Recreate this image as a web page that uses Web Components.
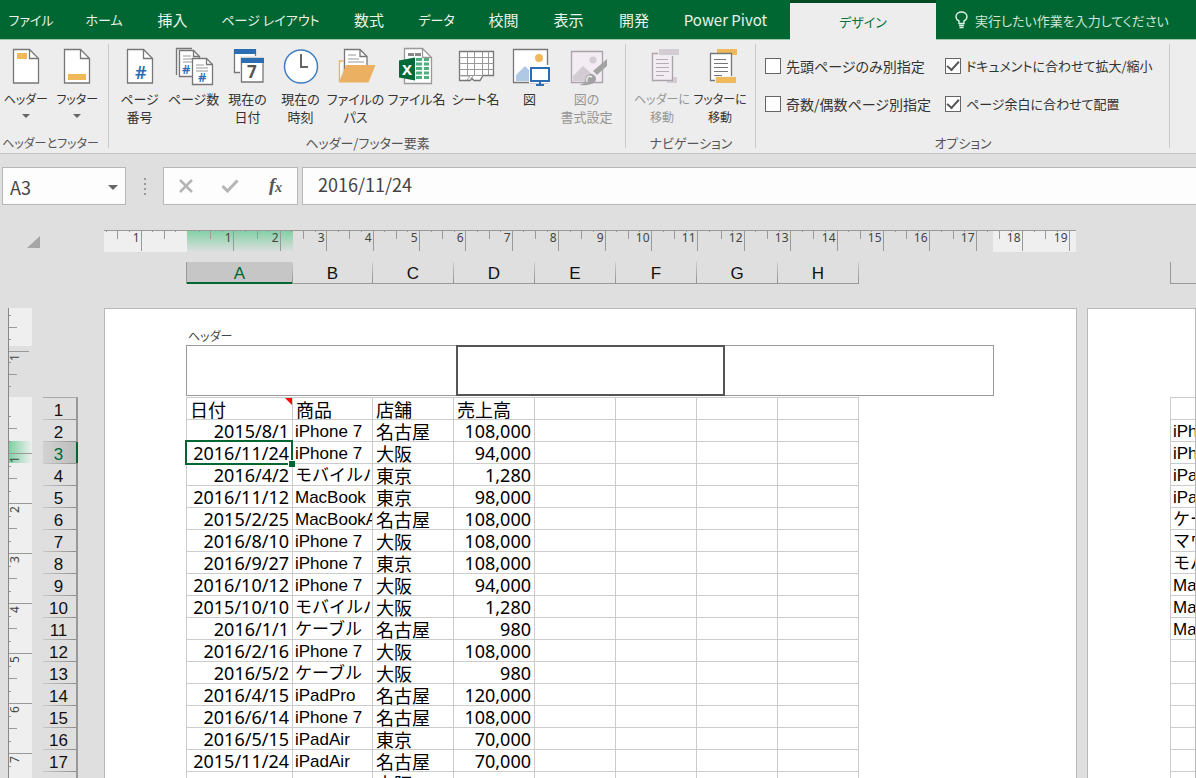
<!DOCTYPE html>
<html lang="ja">
<head>
<meta charset="utf-8">
<title>ワークシート</title>
<style>
html, body { margin: 0; height: 100%; }
body {
  font: 14px/18px "Noto Sans CJK JP", sans-serif;
  font-feature-settings: "palt";
  color: #444; background: #dfdfdf;
  --green: #006733;
}
</style>
</head>
<body>
<excel-app></excel-app>
<script>
const define = (name, html, setup) => {
  const template = document.createElement('template');
  template.innerHTML = '<style>*{box-sizing:border-box}:host([hidden]){display:none}button,input,textarea{font:inherit;font-feature-settings:inherit;color:inherit;margin:0;padding:0;border:0;background:none;outline:0}</style>' + html;
  customElements.define(name, class extends HTMLElement {
    connectedCallback() {
      if (this.shadowRoot) return;
      this.attachShadow({ mode: 'open' }).append(template.content.cloneNode(true));
      if (setup) setup(this, this.shadowRoot);
    }
  });
};

const page = (x, y, w, h, f, stroke = '#777') =>
  `<path d="M${x} ${y}h${w - f}l${f} ${f}v${h - f}h-${w}z" fill="#fff" stroke="${stroke}" stroke-width="1.3"/><path d="M${x + w - f} ${y}v${f}h${f}" fill="none" stroke="${stroke}" stroke-width="1.3"/>`;
const hash = (x, y, size) =>
  `<text x="${x}" y="${y}" font-family="Noto Sans" font-weight="600" font-size="${size}" fill="#2b6cb3">#</text>`;

const ICONS = {
  header: page(7.5, 2.5, 25, 33.5, 9) + '<path d="M11 6h10v6H11z" fill="#efb95c"/>',
  footer: page(7.5, 2.5, 25, 33.5, 9) + '<path d="M11 27h18v6H11z" fill="#efb95c"/>',
  number: page(7.5, 2.5, 25, 33.5, 9) + hash(15, 32, 18),
  count: '<path d="M18 1.500H2.500V28" fill="none" stroke="#777" stroke-width="1.300"/>' +
    page(5.5, 3.5, 20, 26, 6) + '<path d="M9 9h8M9 12h10M9 15h10" stroke="#999"/>' + hash(8, 27, 13) +
    page(18.5, 11.5, 20, 26, 6) + '<path d="M22 18h8M22 21h12M22 24h12" stroke="#999"/>' + hash(24, 35, 13),
  date: '<path d="M6.500 3.500h21v22h-21z" fill="#fff" stroke="#777" stroke-width="1.300"/><path d="M6 2h22v5H6z" fill="#2b6cb3"/>' +
    '<path d="M12 9h25v28H12z" fill="#ededed"/><path d="M13.500 11.500h21.500v23.500H13.500z" fill="#fff" stroke="#777" stroke-width="1.300"/><path d="M13 11h23v5H13z" fill="#2b6cb3"/>' +
    '<text x="19" y="31" font-family="Noto Sans" font-weight="700" font-size="17" fill="#555">7</text>',
  time: '<circle cx="20" cy="19.500" r="16.500" fill="#fff" stroke="#3f7fc0" stroke-width="1.500"/><path d="M20 7v13H27" fill="none" stroke="#666" stroke-width="2"/>',
  path: '<path d="M3.500 35V14h4" fill="#fff" stroke="#ecb062" stroke-width="1.300"/>' + page(8.5, 2.5, 22.5, 26, 7) +
    '<path d="M12 8h8M12 12h11M12 15h16" stroke="#999"/><path d="M10 18h29.500l-7 17.500H3z" fill="#ecb062"/>',
  file: page(7.5, 1.5, 27, 35, 9, '#999') + '<path d="M11 6h6v3h-6zM18 6h6v3h-6z" fill="#888"/>' +
    '<path d="M19 11h6v3h-6zM27 11h5v3h-5zM19 15.500h6v3h-6zM27 15.500h5v3h-5zM19 20h6v3h-6zM27 20h5v3h-5zM19 24.500h6v3h-6zM27 24.500h5v3h-5zM19 29h6v3h-6zM27 29h5v3h-5z" fill="#4fae7d"/>' +
    '<path d="M2 13.500l16-3v23l-16-3z" fill="#006b37"/><text x="5" y="28" font-family="Noto Sans" font-weight="700" font-size="15" fill="#fff">X</text>',
  sheet: '<path d="M3.500 4.500h34v24H27l-3 5h-6l-2-2-2 2H3.500z" fill="#fff" stroke="#777" stroke-width="1.300"/><path d="M3.500 10.500h34M3.500 16.500h34M3.500 22.500h34M3.500 28.500H27M11.500 4.500v24M18.500 4.500v24M26.500 4.500v24M32.500 4.500v24M14 33l3-4M5 29h9l-3 4" fill="none" stroke="#999"/>',
  picture: '<path d="M3.500 2.500h34v33h-34z" fill="#fff" stroke="#777" stroke-width="1.300"/><circle cx="29" cy="11" r="4" fill="#efb95c"/>' +
    '<path d="M6 34V28l9-9 5 5v10z" fill="#afc8e3"/><path d="M19 18h21v18H19z" fill="#fff"/><path d="M21 21h18v13H21z" fill="#fff" stroke="#2b6cb3" stroke-width="2"/><path d="M30 34v4M26 38h8" stroke="#2b6cb3" stroke-width="2"/>',
  format: '<path d="M4.500 4.500h31v31h-31z" fill="#f3edf3" stroke="#aaa3aa" stroke-width="1.300"/><circle cx="26" cy="13" r="3.500" fill="#d3ccd3"/><path d="M6 34v-5l10-10 9 8-5 7z" fill="#d3ccd3"/>' +
    '<path d="M40 12v7L30 28l-4-4z" fill="#a3a3a3"/><path d="M12 38c6-1 6-4 7-8 3-5 10-3 10 2 0 5-8 7-17 6z" fill="#a3a3a3"/><path d="M20 35c-1-4 1-7 5-5" fill="none" stroke="#eee" stroke-width="1.500"/>',
  toheader: '<path d="M25 30h10v6H25z" fill="#d3ccd3"/><path d="M10.500 6.500h20v27h-20z" fill="#f3edf3" stroke="#aaa3aa" stroke-width="1.300"/><path d="M16 1h22v8H16z" fill="#ededed"/><path d="M17 2h20v6H17z" fill="#d3ccd3"/><path d="M14 12.500h12M14 16.500h13M14 20.500h13M14 24.500h13M14 28.500h8" stroke="#b5aeb5"/>',
  tofooter: '<path d="M17 2h20v6H17z" fill="#efb95c"/><path d="M10.500 6.500h21v27h-21z" fill="#fff" stroke="#777" stroke-width="1.300"/><path d="M14 12.500h12M14 16.500h14M14 20.500h14M14 24.500h14M14 28.500h8" stroke="#777"/><path d="M15 29h21v7H15z" fill="#ededed"/><path d="M16 30h20v6H16z" fill="#efb95c"/>'
};

define('ribbon-tabs', `<style>
  :host { display: grid; grid-template-columns: 62px 84px 53px 143px 54px 81px 53px 77px 54px 129px 146px minmax(0, 1fr);
    height: 40px; background: var(--green); border-bottom: 1px solid #9fc7b0; color: #e8f3ec; }
  button { white-space: nowrap; cursor: pointer; font-size: 15px; line-height: 40px; }
  .kana { font-size: 13px; }
  button.active { background: #ededed; color: #067340; border-top: 3px solid #004a24; height: 40px; line-height: 36px; }
  label { display: flex; align-items: center; gap: 7px; padding-left: 19px; color: #cfe6d8; }
  input { flex: 1; min-width: 0; font-size: 13px; height: 30px; }
  input::placeholder { color: #cfe6d8; opacity: 1; }
</style>
<button class="kana">ファイル</button><button class="kana">ホーム</button><button>挿入</button><button class="kana">ページ レイアウト</button><button>数式</button><button class="kana">データ</button><button>校閲</button><button>表示</button><button>開発</button><button>Power Pivot</button><button class="kana active">デザイン</button>
<label><svg width="13" height="18" viewBox="0 0 13 18" fill="none" stroke="#dcefe3" stroke-width="1.400"><path d="M4 12.500V10C2 9 1 7.500 1 5.500 1 3 3.500 1 6.500 1S12 3 12 5.500C12 7.500 11 9 9 10v2.500zM4 14.500h5M4.500 16.500h4"/></svg><input aria-label="操作アシスト" placeholder="実行したい作業を入力してください"></label>`);

define('ribbon-group', `<style>
  :host { display: flex; flex-direction: column; position: relative; padding: 7px 0 1px; }
  :host::after { content: ""; position: absolute; right: 0; top: 4px; bottom: 5px; width: 1px; background: #c9c9c9; }
  .items { flex: 1; display: flex; justify-content: center; }
  footer { text-align: center; color: #555; white-space: nowrap; font-size: 13px; }
  :host(.narrow) footer { font-size: 12px; padding-right: 8px; }
</style><div class="items"><slot></slot></div><footer></footer>`, (host, root) => {
  root.querySelector('footer').textContent = host.getAttribute('label');
});

define('ribbon-button', `<style>
  :host { display: block; }
  button { display: block; width: 100%; text-align: center; color: #333; font-size: 13px; }
  svg { display: block; margin: 0 auto 5px; overflow: visible; }
  span { display: flex; flex-direction: column; align-items: center; white-space: nowrap; }
  i { display: block; width: 0; margin: 6px auto 0; border: 4px solid transparent; border-top-color: #666; border-bottom: 0; }
  :host(.narrow) button { font-size: 12px; }
  :host([disabled]) button { color: #969696; }
</style><button><svg width="40" height="38" viewBox="0 0 40 38"></svg><span><slot></slot></span></button>`, (host, root) => {
  root.querySelector('svg').innerHTML = ICONS[host.getAttribute('icon')];
  root.querySelector('button').disabled = host.hasAttribute('disabled');
  if (host.hasAttribute('menu')) root.querySelector('button').append(document.createElement('i'));
});

define('ribbon-check', `<style>
  :host { display: block; }
  label { display: flex; align-items: center; gap: 5px; color: #333; white-space: nowrap; height: 18px; }
  :host([checked]) label { font-size: 13px; }
  input { appearance: none; flex: none; width: 16px; height: 16px; border: 1px solid #666; background: #fff; display: grid; place-items: center; }
  input:checked::before { content: ""; width: 10px; height: 5px; margin-top: -4px; border: solid #555; border-width: 0 0 2px 2px; rotate: -48deg; }
</style><label><input type="checkbox"><span><slot></slot></span></label>`, (host, root) => {
  root.querySelector('input').checked = host.hasAttribute('checked');
});

define('ribbon-panel', `<style>
  :host { display: grid; grid-template-columns: 109px 517px 130px 414px 1fr; height: 114px; background: #ededed; border-bottom: 1px solid #c6c6c6; }
  .w52 { width: 52px; } .w54 { width: 54px; } .w58 { width: 58px; } .w64 { width: 64px; } .w60 { width: 60px; }
  .pad { width: 6px; }
  .checks { display: grid; grid-template-columns: 180px 1fr; grid-auto-rows: 18px; row-gap: 20px; padding: 10px 0 0 9px; width: 100%; align-content: start; }
</style>
<ribbon-group class="narrow" label="ヘッダーとフッター">
  <ribbon-button class="w52 narrow" icon="header" menu>ヘッダー</ribbon-button><ribbon-button class="w52 narrow" icon="footer" menu>フッター</ribbon-button><span class="pad"></span>
</ribbon-group>
<ribbon-group label="ヘッダー/フッター要素">
  <ribbon-button class="w54" icon="number"><span>ページ</span><span>番号</span></ribbon-button>
  <ribbon-button class="w54" icon="count">ページ数</ribbon-button>
  <ribbon-button class="w54" icon="date"><span>現在の</span><span>日付</span></ribbon-button>
  <ribbon-button class="w52" icon="time"><span>現在の</span><span>時刻</span></ribbon-button>
  <ribbon-button class="w58" icon="path"><span>ファイルの</span><span>パス</span></ribbon-button>
  <ribbon-button class="w64" icon="file">ファイル名</ribbon-button>
  <ribbon-button class="w54" icon="sheet">シート名</ribbon-button>
  <ribbon-button class="w54" icon="picture">図</ribbon-button>
  <ribbon-button class="w60" icon="format" disabled><span>図の</span><span>書式設定</span></ribbon-button>
  <span class="pad"></span>
</ribbon-group>
<ribbon-group label="ナビゲーション">
  <ribbon-button class="w58 narrow" icon="toheader" disabled><span>ヘッダーに</span><span>移動</span></ribbon-button>
  <ribbon-button class="w58 narrow" icon="tofooter"><span>フッターに</span><span>移動</span></ribbon-button>
</ribbon-group>
<ribbon-group label="オプション">
  <div class="checks">
    <ribbon-check>先頭ページのみ別指定</ribbon-check><ribbon-check checked>ドキュメントに合わせて拡大/縮小</ribbon-check>
    <ribbon-check>奇数/偶数ページ別指定</ribbon-check><ribbon-check checked>ページ余白に合わせて配置</ribbon-check>
  </div>
</ribbon-group>`);

define('formula-bar', `<style>
  :host { display: flex; padding: 13px 0 0 2px; height: 51px; }
  .box { display: flex; align-items: center; background: #fdfdfd; border: 1px solid #b8b8b8; height: 38px; }
  .name { width: 124px; padding: 2px 7px 0; }
  .name input { flex: 1; min-width: 0; font-size: 18px; height: 30px; }
  .name button { width: 10px; height: 20px; display: grid; place-items: center; }
  i { border: 5px solid transparent; border-top-color: #666; border-bottom: 0; }
  .grip { width: 37px; display: grid; gap: 3px; place-content: center; }
  .grip b { width: 2px; height: 2px; background: #999; }
  .tools { width: 135px; justify-content: space-around; margin-right: 4px; }
  .tools button { width: 36px; height: 30px; display: grid; place-items: center; }
  .fx { font: italic bold 19px/24px "Liberation Serif", serif; color: #555; }
  .value { flex: 1; border-right: 0; padding: 0 0 4px 15px; }
  .value input { width: 100%; font-size: 18px; height: 30px; }
</style>
<div class="box name"><input aria-label="名前ボックス" value="A3"><button aria-label="名前の一覧"><i></i></button></div>
<div class="grip"><b></b><b></b><b></b><b></b></div>
<div class="box tools">
  <button aria-label="キャンセル"><svg width="14" height="14" stroke="#b5b5b5" stroke-width="2.500"><path d="M1 1l12 12M13 1L1 13"/></svg></button>
  <button aria-label="入力"><svg width="18" height="14" fill="none" stroke="#b5b5b5" stroke-width="3"><path d="M1.500 7l5 5L16.500 1.500"/></svg></button>
  <button class="fx" aria-label="関数の挿入"><svg width="18" height="22"><text x="3" y="16" font-size="19" fill="#555">f</text><text x="9" y="17" font-size="14" fill="#555">x</text></svg></button>
</div>
<div class="box value"><input aria-label="数式バー" value="2016/11/24"></div>`);

/* Horizontal ruler: 83px margins, unit ticks measured from the left page margin */
define('horizontal-ruler', `<style>
  :host { display: grid; grid-template-columns: 83px 106px 700px 83px; height: 22px; width: 972px; position: relative; }
  .light { background: #efefef; }
  .on { background: linear-gradient(#7fd0a3, #dfdfdf); }
  svg { position: absolute; inset: 0; }
  text { font: 12px "Noto Sans", sans-serif; fill: #444; text-anchor: end; }
</style><div class="light"></div><div class="on"></div><div></div><div class="light"></div><svg width="972" height="22"></svg>`, (host, root) => {
  let out = '<path d="M0 .5H972" stroke="#999"/>';
  for (let q = -7; q <= 76; q++) {
    const x = Math.round(83 + q * 46.4 / 4) + 0.5;
    if (q === 0 || x < 1) continue;
    const h = q % 4 === 0 ? 21 : q % 2 === 0 ? 9 : 2;
    out += `<path d="M${x} 0V${h}" stroke="#999"/>`;
    if (q % 4 === 0) out += `<text x="${x - 2}" y="12">${Math.abs(q / 4)}</text>`;
  }
  root.querySelector('svg').innerHTML = out;
});

define('vertical-ruler', `<style>
  :host { display: grid; grid-template-rows: 38px 51px 44px 22px 1fr; position: relative; height: 480px; border-left: 1px solid #888; }
  .light { background: #efefef; }
  .on { background: linear-gradient(90deg, #7fd0a3, #efefef); }
  svg { position: absolute; inset: 0; overflow: visible; }
  text { font: 12px "Noto Sans", sans-serif; fill: #444; text-anchor: end; }
</style><div class="light"></div><div></div><div class="light"></div><div class="on"></div><div class="light"></div><svg width="23" height="480"></svg>`, (host, root) => {
  let out = '';
  const tick = (y, w) => { out += `<path d="M0 ${Math.round(y) + 0.5}H${w}" stroke="#999"/>`; };
  const label = (y, n) => { out += `<text transform="translate(10 ${Math.round(y) + 3}) rotate(-90)">${n}</text>`; };
  [[7, 2], [19, 8], [31, 2], [43, 20], [54, 2], [66, 8], [78, 2]].forEach(t => tick(...t));
  label(43, 1);
  for (let q = 1; q < 38; q++) {
    const y = 95 + q * 12.5;
    tick(y, q % 4 === 0 ? 23 : q % 2 === 0 ? 8 : 2);
    if (q % 4 === 0) label(y, q / 4);
  }
  root.querySelector('svg').innerHTML = out;
});

define('column-headings', `<style>
  :host { display: grid; grid-auto-flow: column; height: 22px; border-left: 1px solid #999; border-bottom: 1px solid #999; justify-content: start;
    font: 17px/23px "Liberation Sans", sans-serif; color: #111; }
  span { text-align: center; width: 81px; border-right: 1px solid; border-image: linear-gradient(#d0d0d0, #8c8c8c) 1; height: 21px; }
  span:nth-of-type(2) { width: 80px; }
  span.on { width: 106px; background: #c6c6c6; color: #006733; height: 22px; box-shadow: inset 0 -2px #006733; }
</style>`, (host, root) => {
  for (const c of host.getAttribute('names')) {
    const s = document.createElement('span');
    s.textContent = c;
    if (c === 'A') s.className = 'on';
    root.append(s);
  }
});

define('row-headings', `<style>
  :host { display: block; border-top: 1px solid #aaa; border-right: 2px solid #999; font: 17px/25px "Liberation Sans", sans-serif; color: #111; }
  div { height: 22px; text-align: center; border-bottom: 1px solid; border-image: linear-gradient(90deg, #ccc, #8c8c8c) 1; padding-right: 2px; }
  .on { background: linear-gradient(90deg, #d2d2d2, #bcbcbc); color: #006733; margin-right: -2px; padding-right: 4px; box-shadow: inset -2px 0 #006733; }
</style>`, (host, root) => {
  for (let i = 1; i <= 18; i++) {
    const d = document.createElement('div');
    d.textContent = i;
    if (i === 3) d.className = 'on';
    root.append(d);
  }
});

define('cell-grid', `<style>
  :host { display: block; }
  table { table-layout: fixed; border-collapse: separate; border-spacing: 0; border-left: 1px solid #ccc; border-top: 1px solid #ccc; color: #000; }
  td { padding: 3px 2px 0; height: 22px; border-right: 1px solid #ccc; border-bottom: 1px solid #ccc; white-space: nowrap; overflow: hidden;
    font: 17px/18px "Liberation Sans", "Noto Sans CJK JP", sans-serif; position: relative; }
  td.num { text-align: right; padding: 2px 3px 0 0; font: 18px/19px "Noto Sans", sans-serif; overflow: visible; }
  td.kanji { padding: 2px 0 0 3px; font: 18px/19px "Noto Sans CJK JP", sans-serif; overflow: visible; }
  td.selected::before { content: ""; position: absolute; z-index: 1; inset: -2px -1px -2px -2px; border: 2px solid #006733; }
  td.selected::after { content: ""; position: absolute; z-index: 2; right: -3px; bottom: -4px; width: 6px; height: 6px; border: solid #fff; border-width: 1px 0 0 1px; background: #006733; box-sizing: content-box; }
  td.note::after { content: ""; position: absolute; right: 0; top: 0; border-left: 7px solid transparent; border-top: 7px solid red; }
</style><table><colgroup></colgroup><tbody></tbody></table>`, (host, root) => {
  const continued = host.hasAttribute('continued');
  const rows = continued ? SECOND.map(t => [t, '']) : FIRST;
  const widths = continued ? [106, 81] : [106, 80, 81, 81, 81, 81, 81, 81];
  root.querySelector('table').style.width = widths.reduce((a, b) => a + b) + 1 + 'px';
  root.querySelector('colgroup').innerHTML = widths.map(w => `<col style="width:${w}px">`).join('');
  const body = root.querySelector('tbody');
  rows.forEach((row, r) => {
    const tr = body.insertRow();
    widths.forEach((_, c) => {
      const td = tr.insertCell();
      td.textContent = row[c] || '';
      if (continued) return;
      if (r > 0 && (c === 0 || c === 3)) td.classList.add('num');
      else if (r === 0 || c === 2) td.classList.add('kanji');
      if (r === 0 && c === 0) td.classList.add('note');
      if (r === 2 && c === 0) td.classList.add('selected');
    });
  });
});

define('sheet-page', `<style>
  :host { display: block; background: #fff; border: 1px solid #b8b8b8; border-bottom: 0; padding-left: 81px; min-height: 480px; min-width: 0; overflow: hidden; }
  :host(.next) { padding-left: 82px; }
</style><slot></slot>`);

define('page-header', `<style>
  :host { display: block; padding-top: 18px; }
  .title { color: #444; font-size: 12px; line-height: 18px; padding-left: 2px; }
  .parts { display: grid; grid-template-columns: 1fr 269px 1fr; width: 808px; height: 52px; padding-bottom: 1px; }
  textarea { display: block; width: 100%; height: 51px; resize: none; border: 1px solid #999; background: #fff; }
  textarea:first-child { border-right: 0; } textarea:last-child { border-left: 0; }
  .focus { border: 2px solid #555; }
</style><div class="title">ヘッダー</div><div class="parts"><textarea aria-label="左側"></textarea><textarea class="focus" aria-label="中央部"></textarea><textarea aria-label="右側"></textarea></div>`);

define('sheet-view', `<style>
  :host { display: grid; grid-template-columns: 24px 36px 989px minmax(0, 1fr); grid-template-rows: 22px 22px auto; column-gap: 10px;
    padding: 25px 0 0 8px; align-content: start; overflow: hidden; }
  .corner { grid-column: 1 / 3; justify-self: end; margin: 6px 38px 0 0; width: 0; height: 12px; border: solid transparent; border-width: 12px 0 0 13px; border-bottom: 12px solid #a5a5a5; border-top: 0; }
  horizontal-ruler { grid-column: 3; margin-left: 16px; }
  column-headings { grid-row: 2; grid-column: 3; justify-self: start; margin: 10px 0 -10px 98px; }
  column-headings.next { grid-column: 4; justify-self: stretch; margin-left: 83px; overflow: hidden; }
  vertical-ruler, .rows, sheet-page { grid-row: 3; margin-top: 34px; }
  vertical-ruler { grid-column: 1; }
  .rows { grid-column: 2; padding: 89px 0 0 1px; }
  sheet-page.main { grid-column: 3; margin-left: 16px; }
  sheet-page.next { grid-column: 4; }
  .blank { height: 88px; }
</style>
<div class="corner"></div>
<horizontal-ruler></horizontal-ruler>
<column-headings names="ABCDEFGH"></column-headings>
<column-headings class="next" names=" "></column-headings>
<vertical-ruler></vertical-ruler>
<div class="rows"><row-headings></row-headings></div>
<sheet-page class="main"><page-header></page-header><cell-grid></cell-grid></sheet-page>
<sheet-page class="next"><div class="blank"></div><cell-grid continued></cell-grid></sheet-page>`);

const FIRST = `日付|商品|店舗|売上高
2015/8/1|iPhone 7|名古屋|108,000
2016/11/24|iPhone 7|大阪|94,000
2016/4/2|モバイルバッテリー|東京|1,280
2016/11/12|MacBook|東京|98,000
2015/2/25|MacBookAir|名古屋|108,000
2016/8/10|iPhone 7|大阪|108,000
2016/9/27|iPhone 7|東京|108,000
2016/10/12|iPhone 7|大阪|94,000
2015/10/10|モバイルバッテリー|大阪|1,280
2016/1/1|ケーブル|名古屋|980
2016/2/16|iPhone 7|大阪|108,000
2016/5/2|ケーブル|大阪|980
2016/4/15|iPadPro|名古屋|120,000
2016/6/14|iPhone 7|名古屋|108,000
2016/5/15|iPadAir|東京|70,000
2015/11/24|iPadAir|名古屋|70,000
||大阪|`.split('\n').map(l => l.split('|'));
const SECOND = ['', 'iPhone 7', 'iPhone 7', 'iPadAir', 'iPadPro', 'ケーブル', 'マウス', 'モバイルバッテリー', 'MacBook', 'MacBook', 'MacBook', '', '', '', '', '', '', ''];

define('excel-app', `<style>
  :host { display: flex; flex-direction: column; height: 100vh; overflow: hidden; }
  sheet-view { flex: 1; min-height: 0; }
</style><ribbon-tabs></ribbon-tabs><ribbon-panel></ribbon-panel><formula-bar></formula-bar><sheet-view></sheet-view>`);
</script>
</body>
</html>
